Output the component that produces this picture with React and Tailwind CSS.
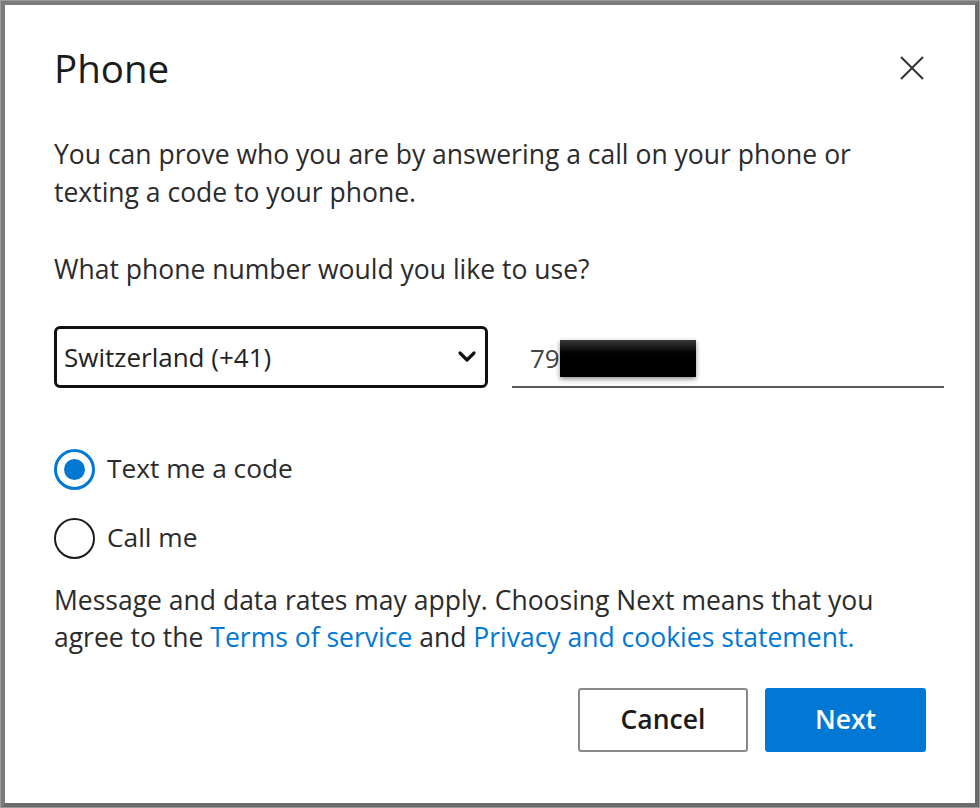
const font = { fontFamily: '"Segoe UI", "Open Sans", sans-serif' }

const CloseIcon = () => (
  <svg width="26" height="26" viewBox="0 0 26 26" fill="none" stroke="#333" strokeWidth="2">
    <path d="M2 2 L24 24 M24 2 L2 24" />
  </svg>
)

const Chevron = () => (
  <svg width="20" height="14" viewBox="0 0 20 14" fill="none" stroke="#111" strokeWidth="3.2" strokeLinecap="round" strokeLinejoin="round">
    <path d="M3 3 L10 10 L17 3" />
  </svg>
)

export default function App() {
  return (
    <div className="w-[980px] h-[808px] bg-[#9a9a9a] p-px">
      <div
        className="w-full h-full bg-white border-[4px] border-[#7b7b7b] border-r-[#6a6a6a] border-b-[#6a6a6a] text-[#2b2b2b]"
        style={font}
      >
        <div className="w-[890px] ml-[49px] pt-[41px]">
          <div className="flex items-center justify-between h-[44px]">
            <h1 className="text-[38.5px] leading-[44px] text-[#1b1b1b]">Phone</h1>
            <button className="mr-[19px]">
              <CloseIcon />
            </button>
          </div>

          <p className="mt-[45px] w-[870px] text-[26.5px] leading-[38px]">
            You can prove who you are by answering a call on your phone or texting a code to your phone.
          </p>

          <p className="mt-[39px] text-[26.5px] leading-[38px]">What phone number would you like to use?</p>

          <div className="mt-[38px] flex items-start gap-[24px]">
            <div className="w-[434px] h-[62px] border-[3px] border-[#111] rounded-[6px] flex items-center justify-between pl-[7px] pr-[8px]">
              <span className="text-[26px] text-[#222]">Switzerland (+41)</span>
              <Chevron />
            </div>
            <div className="flex-1 h-[62px] border-b-2 border-[#5a5a5a] flex items-center pl-[18px] pt-[4px]">
              <span className="text-[26px] text-[#444]">79</span>
              <span className="inline-block w-[136px] h-[37px] bg-black shadow-[0_2px_5px_rgba(0,0,0,0.45)] bg-gradient-to-b from-[#3a3a3a] via-black to-black"></span>
            </div>
          </div>

          <label className="mt-[61px] flex items-center gap-[12px] h-[40px]">
            <span className="w-[41px] h-[41px] rounded-full border-[3px] border-[#0078d4] flex items-center justify-center">
              <span className="w-[21px] h-[21px] rounded-full bg-[#0078d4]"></span>
            </span>
            <span className="text-[26.3px]">Text me a code</span>
          </label>

          <label className="mt-[29px] flex items-center gap-[12px] h-[40px]">
            <span className="w-[41px] h-[41px] rounded-full border-2 border-[#1b1b1b]"></span>
            <span className="text-[26.3px]">Call me</span>
          </label>

          <p className="mt-[24px] w-[850px] text-[26.5px] leading-[37px]">
            Message and data rates may apply. Choosing Next means that you agree to the{' '}
            <a className="text-[#0078d4]">Terms of service</a> and{' '}
            <a className="text-[#0078d4]">Privacy and cookies statement.</a>
          </p>

          <div className="mt-[32px] flex justify-end gap-[17px] pr-[18px]">
            <button className="w-[170px] h-[64px] border-2 border-[#8a8a8a] rounded-[3px] text-[26.5px] font-semibold text-[#1b1b1b]">
              Cancel
            </button>
            <button className="w-[161px] h-[64px] bg-[#0078d4] rounded-[3px] text-[26.5px] font-semibold text-white">
              Next
            </button>
          </div>
        </div>
      </div>
    </div>
  )
}
